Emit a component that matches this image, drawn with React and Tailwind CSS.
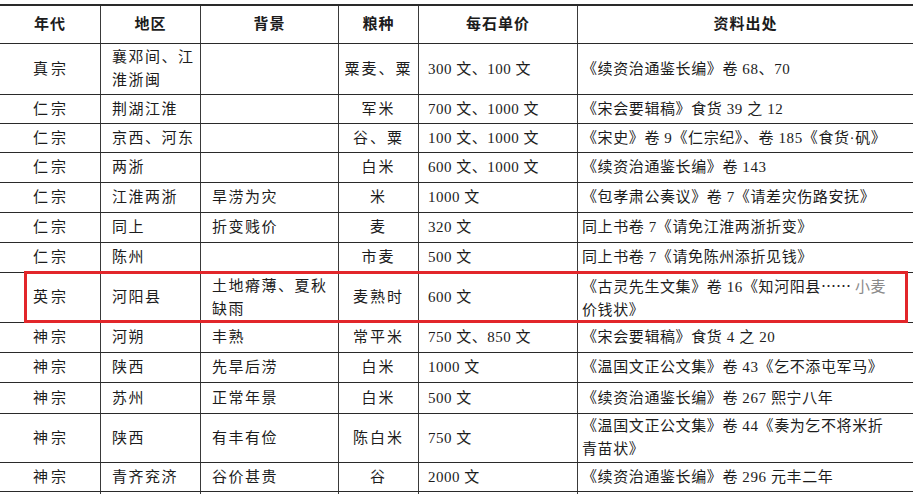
import React from 'react';

const rows = [
    { h: 'h-[51px]', era: '真宗', place: ['襄邓间、江', '淮浙闽'], bg: [], grain: '粟麦、粟', price: '300 文、100 文', src: ['《续资治通鉴长编》卷 68、70'] },
    { h: 'h-[29px]', era: '仁宗', place: ['荆湖江淮'], bg: [], grain: '军米', price: '700 文、1000 文', src: ['《宋会要辑稿》食货 39 之 12'] },
    { h: 'h-[29px]', era: '仁宗', place: ['京西、河东'], bg: [], grain: '谷、粟', price: '100 文、1000 文', src: ['《宋史》卷 9《仁宗纪》、卷 185《食货·矾》'] },
    { h: 'h-[30px]', era: '仁宗', place: ['两浙'], bg: [], grain: '白米', price: '600 文、1000 文', src: ['《续资治通鉴长编》卷 143'] },
    { h: 'h-[30px]', era: '仁宗', place: ['江淮两浙'], bg: ['旱涝为灾'], grain: '米', price: '1000 文', src: ['《包孝肃公奏议》卷 7《请差灾伤路安抚》'] },
    { h: 'h-[30px]', era: '仁宗', place: ['同上'], bg: ['折变贱价'], grain: '麦', price: '320 文', src: ['同上书卷 7《请免江淮两浙折变》'] },
    { h: 'h-[30px]', era: '仁宗', place: ['陈州'], bg: [], grain: '市麦', price: '500 文', src: ['同上书卷 7《请免陈州添折见钱》'] },
    { h: 'h-[50px]', era: '英宗', place: ['河阳县'], bg: ['土地瘠薄、夏秋', '缺雨'], grain: '麦熟时', price: '600 文', src: ['《古灵先生文集》卷 16《知河阳县', '价钱状》'], marked: true },
    { h: 'h-[30px]', era: '神宗', place: ['河朔'], bg: ['丰熟'], grain: '常平米', price: '750 文、850 文', src: ['《宋会要辑稿》食货 4 之 20'] },
    { h: 'h-[30px]', era: '神宗', place: ['陕西'], bg: ['先旱后涝'], grain: '白米', price: '1000 文', src: ['《温国文正公文集》卷 43《乞不添屯军马》'] },
    { h: 'h-[31px]', era: '神宗', place: ['苏州'], bg: ['正常年景'], grain: '白米', price: '500 文', src: ['《续资治通鉴长编》卷 267 熙宁八年'] },
    { h: 'h-[49px]', era: '神宗', place: ['陕西'], bg: ['有丰有俭'], grain: '陈白米', price: '750 文', src: ['《温国文正公文集》卷 44《奏为乞不将米折', '青苗状》'] },
    { h: 'h-[29px]', era: '神宗', place: ['青齐兖济'], bg: ['谷价甚贵'], grain: '谷', price: '2000 文', src: ['《续资治通鉴长编》卷 296 元丰二年'] },
];

const grid = 'grid grid-cols-[101px_100px_138px_80px_159px_1fr]';
const cell = 'border-r border-[#3a3a3a] flex flex-col justify-center leading-[23px]';

function Lines({ items, extra }) {
    return items.map((t, i) => (
        <span key={i} className="whitespace-nowrap">
            {t}
            {extra && i === 0 && (
                <>
                    <span className="font-['Noto_Sans_CJK_SC',sans-serif] tracking-[0px]">……</span>
                    <span className="text-[#8a8a8a] ml-[4px]">小麦</span>
                </>
            )}
        </span>
    ));
}

export default function App() {
    return (
        <div className="h-[494px] w-[913px] overflow-hidden bg-white pt-[4px] text-[15px] text-[#1c1c1c] font-['Liberation_Serif','Noto_Sans_CJK_SC',serif]">
            <div className="border-t-2 border-[#2a2a2a]">
                {/* header */}
                <div className={`${grid} h-[38px] border-b border-[#2a2a2a] font-bold tracking-[1px] text-[15px]`}>
                    <div className={`${cell} items-center`}>年代</div>
                    <div className={`${cell} items-center`}>地区</div>
                    <div className={`${cell} items-center`}>背景</div>
                    <div className={`${cell} items-center`}>粮种</div>
                    <div className={`${cell} items-center`}>每石单价</div>
                    <div className="flex items-center justify-center">资料出处</div>
                </div>

                {rows.map((r, i) => (
                    <div key={i} className={`${grid} ${r.h} relative border-b border-[#2a2a2a]`}>
                        <div className={`${cell} items-center tracking-[3px] pl-[2px]`}>{r.era}</div>
                        <div className={`${cell} pl-[11px] tracking-[1.5px]`}>
                            <Lines items={r.place} />
                        </div>
                        <div className={`${cell} pl-[11px] tracking-[1.5px]`}>
                            <Lines items={r.bg} />
                        </div>
                        <div className={`${cell} items-center tracking-[2px]`}>{r.grain}</div>
                        <div className={`${cell} pl-[9px] tracking-[0.5px]`}>{r.price}</div>
                        <div className="flex flex-col justify-center leading-[23px] pl-[4px] tracking-[0.6px]">
                            <Lines items={r.src} extra={r.marked} />
                        </div>
                        {r.marked && (
                            <div className="absolute left-[24px] top-[-2px] h-[52px] w-[884px] border-[3px] border-[#e2262a] pointer-events-none" />
                        )}
                    </div>
                ))}

                {/* next row, cut off by the page edge */}
                <div className={`${grid} h-[30px]`}>
                    <div className={cell} />
                    <div className={cell} />
                    <div className={cell} />
                    <div className={cell} />
                    <div className={cell} />
                    <div />
                </div>
            </div>
        </div>
    );
}
